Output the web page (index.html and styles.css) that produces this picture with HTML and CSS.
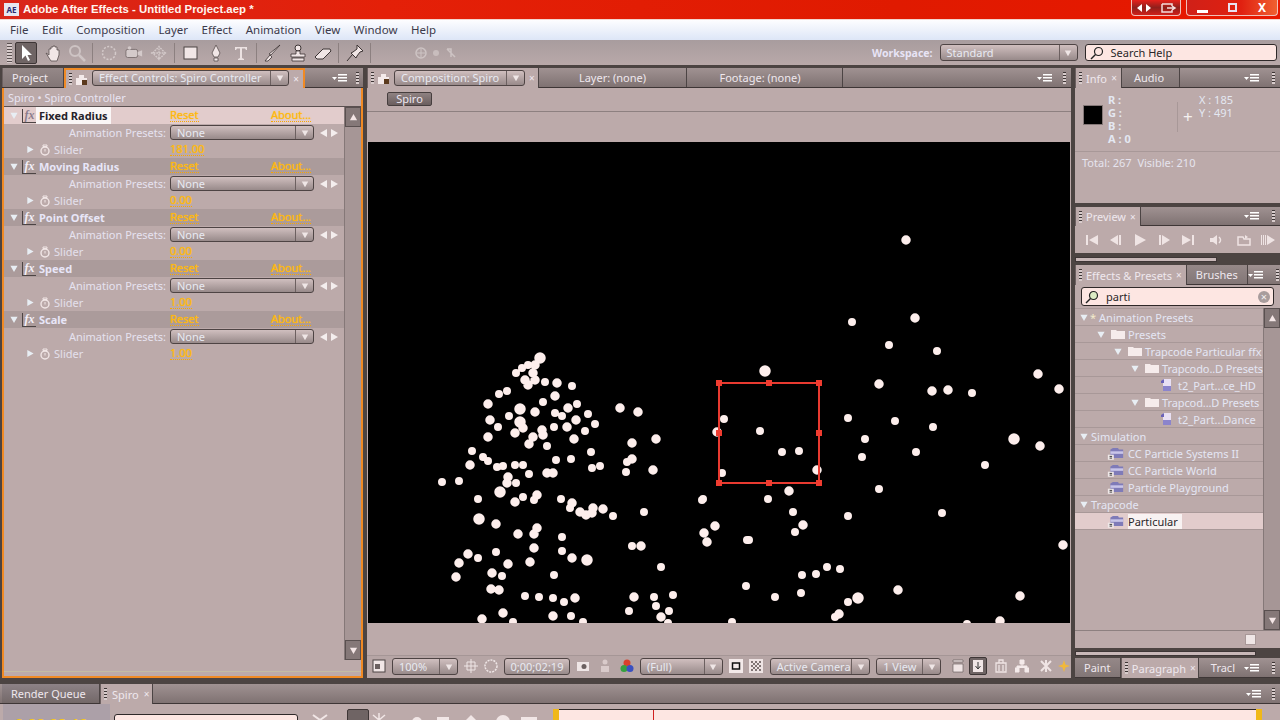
FILE: index.html
```html
<!DOCTYPE html>
<html lang="en">

<head>
    <meta charset="UTF-8">
    <meta name="viewport" content="width=device-width, initial-scale=1.0">
    <title>Adobe After Effects - Untitled Project.aep *</title>
    <link rel="stylesheet" href="styles.css">
</head>

<body>
    <svg class="defs" width="0" height="0">
        <symbol id="down" viewBox="0 0 10 10"><path d="M1 2h8L5 9z" /></symbol>
        <symbol id="right" viewBox="0 0 10 10"><path d="M2 1v8l7-4z" /></symbol>
        <symbol id="left" viewBox="0 0 10 10"><path d="M8 1v8L1 5z" /></symbol>
        <symbol id="up" viewBox="0 0 10 10"><path d="M1 8h8L5 1z" /></symbol>
        <symbol id="watch" viewBox="0 0 12 12"><circle cx="6" cy="7" r="4" fill="none" stroke="currentColor" stroke-width="1.4" /><path d="M4 1h4v1.500H4zM6 5v2.500" fill="none" stroke="currentColor" /></symbol>
        <symbol id="menu" viewBox="0 0 16 10"><path d="M0 4h5L2.500 7z" /><path d="M6 1h9v1.500H6zM6 4h9v1.500H6zM6 7h9v1.500H6z" /></symbol>
        <symbol id="folder" viewBox="0 0 14 12"><path d="M0 2h5l1 1h8v8H0z" /></symbol>
        <symbol id="preset" viewBox="0 0 14 14"><path d="M3 1h8v12H3z" fill="#e8e0f4" /><path d="M1 3l3-2v4H1z" fill="#6a62b8" /><path d="M3 8h8v5H3z" fill="#8b84cc" /></symbol>
        <symbol id="plugin" viewBox="0 0 20 16"><path d="M4 4l3-2h6l1 2h5v10H4z" fill="#7f7bb8" /><path d="M4 6h15v3H4z" fill="#c9c5e8" /><rect x="1" y="10" width="7" height="6" fill="#efe8e8" /><path d="M3 12h3M3 14h3" stroke="#222" /></symbol>
    </svg>

    <header class="titlebar">
        <span class="app-badge">AE</span>
        <span class="app-title">Adobe After Effects - Untitled Project.aep *</span>
        <div class="win-group win-small">
            <svg viewBox="0 0 20 12" width="20" height="12"><path d="M8 2v8L3 6zM12 2v8l5-4z" fill="#fff" /></svg>
            <svg viewBox="0 0 20 12" width="20" height="12"><path d="M4 2h10v2M4 2v8h10V8M9 6h8M14 4l3 2-3 2" fill="none" stroke="#f4dcdc" stroke-width="1.500" /></svg>
        </div>
        <div class="win-group win-big">
            <span class="win-btn"><i class="win-min"></i></span>
            <span class="win-btn"><i class="win-max"></i></span>
            <span class="win-btn win-close">X</span>
        </div>
    </header>

    <nav class="menubar">
        <span>File</span><span>Edit</span><span>Composition</span><span>Layer</span><span>Effect</span><span>Animation</span><span>View</span><span>Window</span><span>Help</span>
    </nav>

    <div class="toolbar">
        <span class="grip"></span>
        <span class="tool tool-on"><svg viewBox="0 0 16 18"><path d="M4 1v14l3.500-3.500L10 17l2-1-2.500-5H14z" fill="#fff" /></svg></span>
        <span class="tool"><svg viewBox="0 0 18 18"><path d="M3 9l3 5 2 3h6l2-6V6h-2V3h-2V2h-2v1H8v2H6v6z" fill="#f1e6e6" stroke="#5a5050" stroke-width=".8" /></svg></span>
        <span class="tool tool-dim"><svg viewBox="0 0 18 18"><circle cx="7" cy="7" r="5" fill="none" stroke="#d5cccc" stroke-width="2" /><path d="M11 11l6 6" stroke="#d5cccc" stroke-width="2.500" /></svg></span>
        <span class="tool-sep"></span>
        <span class="tool tool-dim"><svg viewBox="0 0 18 18"><circle cx="9" cy="9" r="6.500" fill="none" stroke="#ddd4d4" stroke-width="1.500" stroke-dasharray="2 1.500" /></svg></span>
        <span class="tool tool-dim"><svg viewBox="0 0 20 18"><rect x="1" y="5" width="13" height="9" rx="2" fill="#ddd4d4" stroke="#6b6060" /><path d="M14 8l5-2v7l-5-2z" fill="#ddd4d4" /><circle cx="5" cy="3.500" r="2" fill="#ddd4d4" /></svg></span>
        <span class="tool tool-dim"><svg viewBox="0 0 20 18"><path d="M3 9l7-7 7 7-7 7zM1 9h18M10 1v16" fill="none" stroke="#ddd4d4" stroke-width="1.500" stroke-dasharray="2 1" /></svg></span>
        <span class="tool-sep"></span>
        <span class="tool"><svg viewBox="0 0 18 18"><rect x="2" y="3" width="13" height="12" fill="#f1e6e6" stroke="#4c4444" /></svg></span>
        <span class="tool"><svg viewBox="0 0 18 18"><path d="M9 1l4 8-2 4H7L5 9zM7 14h4v3H7z" fill="#f1e6e6" stroke="#5a5050" stroke-width=".8" /></svg></span>
        <span class="tool"><svg viewBox="0 0 18 18"><path d="M3 3h12v3h-1l-1-1.500h-3V14l2 1v1H6v-1l2-1V4.500H5L4 6H3z" fill="#ece2e2" /></svg></span>
        <span class="tool-sep"></span>
        <span class="tool"><svg viewBox="0 0 18 18"><path d="M16 1L7 11l-2-1zM6 11l2 2-4 4H1z" fill="#f1e6e6" stroke="#3c3434" stroke-width=".8" /></svg></span>
        <span class="tool"><svg viewBox="0 0 18 18"><circle cx="9" cy="4" r="3" fill="#f1e6e6" stroke="#3c3434" /><path d="M7 7h4v3h5v3H2v-3h5zM3 14h12v3H3z" fill="#f1e6e6" stroke="#3c3434" stroke-width=".8" /></svg></span>
        <span class="tool"><svg viewBox="0 0 18 18"><path d="M1 13l8-8h7l1 2-8 8H3z" fill="#f1e6e6" stroke="#3c3434" /></svg></span>
        <span class="tool-sep"></span>
        <span class="tool"><svg viewBox="0 0 18 18"><path d="M11 1l6 6-3 1-3 4-1 2-5-5 2-1 4-3zM6 11l-5 6" fill="#f1e6e6" stroke="#3c3434" /></svg></span>
        <span class="tool-sep"></span>
        <span class="axis-group">
            <svg viewBox="0 0 12 12" width="12" height="12"><circle cx="6" cy="6" r="5" fill="none" stroke="#d5cccc" stroke-width="1.500" /><path d="M6 2v8M2 6h8" stroke="#d5cccc" /></svg>
            <svg viewBox="0 0 12 12" width="12" height="12"><circle cx="6" cy="6" r="3" fill="#cfc4c4" /></svg>
            <svg viewBox="0 0 12 12" width="12" height="12"><path d="M2 2h4v8M2 2l8 8" fill="none" stroke="#d5cccc" stroke-width="1.500" /></svg>
        </span>
        <span class="workspace-label">Workspace:</span>
        <span class="select workspace-select">Standard<i class="select-arrow"><svg><use href="#down" /></svg></i></span>
        <span class="search-help">
            <svg viewBox="0 0 14 14" width="14" height="14"><circle cx="8.500" cy="5.500" r="4" fill="none" stroke="#222" stroke-width="1.200" /><path d="M5.500 8.500L1 13" stroke="#222" stroke-width="1.400" /></svg>
            Search Help
        </span>
    </div>

    <main class="workspace">
        <section class="panel effects-panel">
            <div class="tabs">
                <span class="tab">Project</span>
                <span class="tab tab-on tab-focus">
                    <span class="tab-grip"></span>
                    <svg class="lock" viewBox="0 0 12 12" width="12" height="12"><path d="M0 5h3V2h5v3h3v7H0z" fill="#f4eaea" /><path d="M6 7h5v5H6z" fill="#5c3a1e" /></svg>
                    <span class="select tab-select">Effect Controls: Spiro Controller<i class="select-arrow"><svg><use href="#down" /></svg></i></span>
                    <span class="tab-x">×</span>
                </span>
                <span class="tab-end"><svg class="menu-icon"><use href="#menu" /></svg><span class="tab-grip"></span></span>
            </div>
            <div class="panel-body effects-body">
                <div class="effects-head">Spiro • Spiro Controller</div>
                <div class="effects-main">
                    <div class="fx-list">
                        <div class="fx-row fx-name fx-selected">
                            <div class="fx-title"><svg class="tri"><use href="#down" /></svg><span class="fx-box">fx</span><span class="fx-label fx-label-on">Fixed Radius</span></div>
                            <a class="link">Reset</a><a class="link">About...</a>
                        </div>
                        <div class="fx-row">
                            <div class="preset-label">Animation Presets:</div>
                            <div class="preset-cell"><span class="select preset-select">None<i class="select-arrow"><svg><use href="#down" /></svg></i></span><svg class="nav"><use href="#left" /></svg><svg class="nav"><use href="#right" /></svg></div>
                        </div>
                        <div class="fx-row">
                            <div class="slider-title"><svg class="tri"><use href="#right" /></svg><svg class="watch"><use href="#watch" /></svg>Slider</div>
                            <a class="link value">181.00</a>
                        </div>

                        <div class="fx-row fx-name">
                            <div class="fx-title"><svg class="tri"><use href="#down" /></svg><span class="fx-box">fx</span><span class="fx-label">Moving Radius</span></div>
                            <a class="link">Reset</a><a class="link">About...</a>
                        </div>
                        <div class="fx-row">
                            <div class="preset-label">Animation Presets:</div>
                            <div class="preset-cell"><span class="select preset-select">None<i class="select-arrow"><svg><use href="#down" /></svg></i></span><svg class="nav"><use href="#left" /></svg><svg class="nav"><use href="#right" /></svg></div>
                        </div>
                        <div class="fx-row">
                            <div class="slider-title"><svg class="tri"><use href="#right" /></svg><svg class="watch"><use href="#watch" /></svg>Slider</div>
                            <a class="link value">0.00</a>
                        </div>

                        <div class="fx-row fx-name">
                            <div class="fx-title"><svg class="tri"><use href="#down" /></svg><span class="fx-box">fx</span><span class="fx-label">Point Offset</span></div>
                            <a class="link">Reset</a><a class="link">About...</a>
                        </div>
                        <div class="fx-row">
                            <div class="preset-label">Animation Presets:</div>
                            <div class="preset-cell"><span class="select preset-select">None<i class="select-arrow"><svg><use href="#down" /></svg></i></span><svg class="nav"><use href="#left" /></svg><svg class="nav"><use href="#right" /></svg></div>
                        </div>
                        <div class="fx-row">
                            <div class="slider-title"><svg class="tri"><use href="#right" /></svg><svg class="watch"><use href="#watch" /></svg>Slider</div>
                            <a class="link value">0.00</a>
                        </div>

                        <div class="fx-row fx-name">
                            <div class="fx-title"><svg class="tri"><use href="#down" /></svg><span class="fx-box">fx</span><span class="fx-label">Speed</span></div>
                            <a class="link">Reset</a><a class="link">About...</a>
                        </div>
                        <div class="fx-row">
                            <div class="preset-label">Animation Presets:</div>
                            <div class="preset-cell"><span class="select preset-select">None<i class="select-arrow"><svg><use href="#down" /></svg></i></span><svg class="nav"><use href="#left" /></svg><svg class="nav"><use href="#right" /></svg></div>
                        </div>
                        <div class="fx-row">
                            <div class="slider-title"><svg class="tri"><use href="#right" /></svg><svg class="watch"><use href="#watch" /></svg>Slider</div>
                            <a class="link value">1.00</a>
                        </div>

                        <div class="fx-row fx-name">
                            <div class="fx-title"><svg class="tri"><use href="#down" /></svg><span class="fx-box">fx</span><span class="fx-label">Scale</span></div>
                            <a class="link">Reset</a><a class="link">About...</a>
                        </div>
                        <div class="fx-row">
                            <div class="preset-label">Animation Presets:</div>
                            <div class="preset-cell"><span class="select preset-select">None<i class="select-arrow"><svg><use href="#down" /></svg></i></span><svg class="nav"><use href="#left" /></svg><svg class="nav"><use href="#right" /></svg></div>
                        </div>
                        <div class="fx-row">
                            <div class="slider-title"><svg class="tri"><use href="#right" /></svg><svg class="watch"><use href="#watch" /></svg>Slider</div>
                            <a class="link value">1.00</a>
                        </div>
                    </div>
                    <div class="scrollbar fx-scroll">
                        <span class="scroll-btn"><svg><use href="#up" /></svg></span>
                        <span class="scroll-btn"><svg><use href="#down" /></svg></span>
                    </div>
                </div>
            </div>
        </section>

        <section class="panel comp-panel">
            <div class="tabs">
                <span class="tab tab-on comp-tab">
                    <span class="tab-grip"></span>
                    <svg class="lock" viewBox="0 0 12 12" width="12" height="12"><path d="M0 5h3V2h5v3h3v7H0z" fill="#f4eaea" /><path d="M6 7h5v5H6z" fill="#5c3a1e" /></svg>
                    <span class="select tab-select comp-select">Composition: Spiro<i class="select-arrow"><svg><use href="#down" /></svg></i></span>
                    <span class="tab-x">×</span>
                </span>
                <span class="tab comp-flat">Layer: (none)</span>
                <span class="tab comp-flat footage-tab">Footage: (none)</span>
                <span class="tab-end"><svg class="menu-icon"><use href="#menu" /></svg><span class="tab-grip"></span></span>
            </div>
            <div class="crumbs"><span class="crumb">Spiro</span></div>
            <div class="viewer-wrap">
                <svg class="viewer" viewBox="368 142 702 481" width="702" height="481">
                    <g class="dots">
                        <path stroke-width="8" d="M528 365h0M522 368h0M516 373h0M545 382h0M572 386h0M507 391h0M499 394h0M543 402h0M577 404h0M555 413h0M562 416h0M588 414h0M509 416h0M498 427h0M554 427h0M595 424h0M585 431h0M547 446h0M472 451h0M591 452h0M483 457h0M488 461h0M556 460h0M571 459h0M627 462h0M497 467h0M503 466h0M515 465h0M523 465h0M592 468h0M600 466h0M626 472h0M442 482h0M459 481h0M529 474h0M516 483h0M478 499h0M523 497h0M534 500h0M561 499h0M570 508h0M613 516h0M644 512h0M562 537h0M496 552h0M478 558h0M562 551h0M554 575h0M502 576h0M525 596h0M539 597h0M553 598h0M564 602h0M571 616h0M513 622h0M583 622h0M632 546h0M661 567h0M654 597h0M673 595h0M656 606h0M629 611h0M669 611h0M668 623h0M732 622h0M747 540h0M746 586h0M702 500h0M852 322h0M889 345h0M937 351h0M972 393h0M848 418h0M895 421h0M933 427h0M724 419h0M760 431h0M782 452h0M799 451h0M865 439h0M862 457h0M916 452h0M985 465h0M722 473h0M879 489h0M768 499h0M703 499h0M793 512h0M848 516h0M942 513h0M795 532h0M749 540h0M827 567h0M840 569h0M802 575h0M816 574h0M775 597h0M801 593h0M848 602h0M835 617h0M967 624h0" />
                        <path stroke-width="9.500" d="M535 365h0M533 373h0M525 380h0M535 380h0M528 385h0M557 383h0M555 396h0M488 404h0M535 412h0M568 408h0M490 420h0M523 428h0M515 433h0M576 420h0M567 427h0M542 430h0M543 435h0M533 437h0M488 437h0M574 439h0M529 444h0M620 408h0M638 412h0M632 443h0M656 439h0M470 465h0M632 459h0M653 470h0M547 473h0M553 473h0M508 477h0M507 483h0M537 495h0M515 502h0M572 503h0M580 512h0M586 515h0M593 508h0M592 513h0M603 509h0M496 524h0M518 534h0M537 528h0M534 534h0M534 548h0M468 554h0M459 563h0M572 558h0M530 562h0M508 564h0M492 573h0M456 577h0M491 589h0M499 590h0M575 598h0M503 613h0M482 619h0M553 616h0M641 546h0M634 597h0M661 617h0M715 526h0M704 533h0M707 542h0M906 240h0M915 318h0M879 384h0M932 391h0M948 390h0M1038 374h0M1059 389h0M717 432h0M1040 446h0M817 470h0M789 491h0M803 525h0M1063 545h0M898 590h0M1020 596h0M839 614h0M1000 621h0" />
                        <path stroke-width="11.500" d="M540 358h0M520 409h0M520 422h0M500 492h0M479 519h0M587 560h0M765 371h0M1014 439h0M858 598h0" />
                    </g>
                    <g class="mask-box">
                        <rect x="719" y="383" width="100" height="100" />
                        <path class="handles" d="M716 380h6v6h-6zM766 380h6v6h-6zM816 380h6v6h-6zM716 430h6v6h-6zM816 430h6v6h-6zM716 480h6v6h-6zM766 480h6v6h-6zM816 480h6v6h-6z" />
                    </g>
                </svg>
            </div>
            <div class="viewer-foot">
                <svg class="foot-icon" viewBox="0 0 14 14"><rect x="1" y="1" width="12" height="12" fill="#f1e6e6" stroke="#4c4444" /><rect x="3" y="5" width="5" height="5" fill="#6b6060" /></svg>
                <span class="select foot-zoom">100%<i class="select-arrow"><svg><use href="#down" /></svg></i></span>
                <svg class="foot-icon" viewBox="0 0 14 14"><path d="M3 3h8v8H3zM0 7h14M7 0v14" fill="none" stroke="#efe6e6" /></svg>
                <svg class="foot-icon" viewBox="0 0 14 14"><circle cx="7" cy="7" r="6" fill="none" stroke="#efe6e6" stroke-dasharray="2 1" stroke-width="1.500" /></svg>
                <span class="select foot-time">0;00;02;19</span>
                <svg class="foot-icon" viewBox="0 0 14 14"><path d="M1 3h12v9H1z" fill="#efe6e6" /><circle cx="8" cy="7.500" r="2.500" fill="#6b6060" /></svg>
                <svg class="foot-icon foot-person" viewBox="0 0 14 14"><circle cx="7" cy="3" r="2.500" fill="#d9caca" /><path d="M3 13V7h8v6z" fill="#d9caca" /></svg>
                <svg class="foot-icon foot-person" viewBox="0 0 14 14"><circle cx="7" cy="4" r="3.500" fill="#d8402c" /><circle cx="4" cy="9.500" r="3.500" fill="#36a040" /><circle cx="10" cy="9.500" r="3.500" fill="#3a50c0" /></svg>
                <span class="select foot-full">(Full)<i class="select-arrow"><svg><use href="#down" /></svg></i></span>
                <svg class="foot-icon" viewBox="0 0 14 14"><rect width="14" height="14" fill="#f4eaea" /><rect x="3.500" y="4" width="7" height="6" fill="none" stroke="#111" stroke-width="1.500" /></svg>
                <svg class="foot-icon" viewBox="0 0 14 14"><rect width="14" height="14" fill="#efe4e4" /><path d="M2 2h2v2H2zM6 2h2v2H6zM10 2h2v2h-2zM4 4h2v2H4zM8 4h2v2H8zM2 6h2v2H2zM6 6h2v2H6zM10 6h2v2h-2zM4 8h2v2H4zM8 8h2v2H8zM2 10h2v2H2zM6 10h2v2H6zM10 10h2v2h-2z" fill="#807474" /></svg>
                <span class="select foot-cam">Active Camera<i class="select-arrow"><svg><use href="#down" /></svg></i></span>
                <span class="select foot-view">1 View<i class="select-arrow"><svg><use href="#down" /></svg></i></span>
                <svg class="foot-icon foot-far" viewBox="0 0 14 14"><path d="M2 1h10v2H2zM2 5h10v8H2z" fill="#efe4e4" stroke="#5a5050" stroke-width=".6" /></svg>
                <span class="foot-boxed"><svg class="foot-icon" viewBox="0 0 14 14"><path d="M2 1h10v12H2z" fill="#f1e6e6" /><path d="M7 3v6M4.500 7L7 10l2.500-3" fill="none" stroke="#333" /></svg></span>
                <svg class="foot-icon foot-nudge" viewBox="0 0 14 14"><path d="M2 4h10v9H2zM5 4V1h4v3M5 6v6M9 6v6" fill="none" stroke="#efe4e4" stroke-width="1.300" /></svg>
                <svg class="foot-icon foot-nudge" viewBox="0 0 14 14"><path d="M5 1h4v4H5zM0 9h4v4H0zM10 9h4v4h-4zM7 5v2M2 9V7h10v2" fill="#f4eaea" stroke="#f4eaea" /></svg>
                <svg class="foot-icon foot-fx" viewBox="0 0 14 14"><path d="M2 2l10 10M12 2L2 12M7 1v12" fill="none" stroke="#efe4e4" stroke-width="2" /></svg>
                <svg class="foot-icon foot-star" viewBox="0 0 14 14"><path d="M7 1l1.500 4.500L13 7 8.500 8.500 7 13 5.500 8.500 1 7l4.500-1.500z" fill="#f0b83c" /></svg>
            </div>
        </section>

        <aside class="side">
            <section class="panel info-panel">
                <div class="tabs">
                    <span class="tab tab-on side-tab info-tab"><span class="tab-grip"></span>Info<span class="tab-x">×</span></span>
                    <span class="tab audio-tab">Audio</span>
                    <span class="tab-end"><svg class="menu-icon"><use href="#menu" /></svg><span class="tab-grip"></span></span>
                </div>
                <div class="panel-body info-body">
                    <div class="info-top">
                        <span class="swatch"></span>
                        <div class="rgba"><span>R :</span><span>G :</span><span>B :</span><span>A : 0</span></div>
                        <span class="cross">+</span>
                        <div class="xy"><span>X : 185</span><span>Y : 491</span></div>
                    </div>
                    <div class="totals">Total: 267&nbsp; Visible: 210</div>
                </div>
            </section>

            <section class="panel preview-panel">
                <div class="tabs">
                    <span class="tab tab-on side-tab"><span class="tab-grip"></span>Preview<span class="tab-x">×</span></span>
                    <span class="tab-end"><svg class="menu-icon"><use href="#menu" /></svg><span class="tab-grip"></span></span>
                </div>
                <div class="panel-body preview-body">
                    <svg viewBox="0 0 14 12"><path d="M1 1h2v10H1zM13 1v10L4 6z" /></svg>
                    <svg viewBox="0 0 14 12"><path d="M10 1h2v10h-2zM9 1v10L1 6z" /></svg>
                    <svg viewBox="0 0 14 12"><path d="M2 0v12l11-6z" /></svg>
                    <svg viewBox="0 0 14 12"><path d="M2 1h2v10H2zM5 1v10l8-5z" /></svg>
                    <svg viewBox="0 0 14 12"><path d="M1 1v10l9-5zM11 1h2v10h-2z" /></svg>
                    <svg class="preview-far" viewBox="0 0 14 12"><path d="M1 4h3l4-3v10L4 8H1z" /><path d="M10 3q3 3 0 6" fill="none" stroke="#efe4e4" stroke-width="1.500" /></svg>
                    <svg class="preview-far" viewBox="0 0 14 12"><path d="M1 3h5l1 2h6v6H1z" fill="none" stroke="#efe4e4" stroke-width="1.500" /><path d="M8 1l3 2-3 2z" /></svg>
                    <svg viewBox="0 0 14 12"><path d="M0 1h1v10H0zM2 1h1v10H2zM4 1h1v10H4zM6 1v10l8-5z" /></svg>
                </div>
            </section>
            <div class="strip strip-top"><i></i></div>

            <section class="panel presets-panel">
                <div class="tabs">
                    <span class="tab tab-on presets-tab"><span class="tab-grip"></span>Effects &amp; Presets<span class="tab-x">×</span></span>
                    <span class="tab">Brushes</span>
                    <span class="tab-end"><svg class="menu-icon"><use href="#menu" /></svg><span class="tab-grip"></span></span>
                </div>
                <div class="panel-body presets-body">
                    <div class="preset-search">
                        <svg viewBox="0 0 14 14" width="14" height="14"><circle cx="8.500" cy="5.500" r="4" fill="#dcecc4" stroke="#222" stroke-width="1.200" /><path d="M5.500 8.500L1 13" stroke="#222" stroke-width="1.400" /></svg>
                        <span class="search-text">parti</span>
                        <span class="search-clear">×</span>
                    </div>
                    <div class="tree-wrap">
                        <div class="tree">
                            <div class="tree-row d0"><svg class="tri"><use href="#down" /></svg><span class="star">*</span>Animation Presets</div>
                            <div class="tree-row d1"><svg class="tri"><use href="#down" /></svg><svg class="folder"><use href="#folder" /></svg>Presets</div>
                            <div class="tree-row d2"><svg class="tri"><use href="#down" /></svg><svg class="folder"><use href="#folder" /></svg>Trapcode Particular ffx</div>
                            <div class="tree-row d3"><svg class="tri"><use href="#down" /></svg><svg class="folder"><use href="#folder" /></svg>Trapcodo..D Presets</div>
                            <div class="tree-row d4"><svg class="item-icon"><use href="#preset" /></svg>t2_Part...ce_HD</div>
                            <div class="tree-row d3"><svg class="tri"><use href="#down" /></svg><svg class="folder"><use href="#folder" /></svg>Trapcod...D Presets</div>
                            <div class="tree-row d4"><svg class="item-icon"><use href="#preset" /></svg>t2_Part...Dance</div>
                            <div class="tree-row d0"><svg class="tri"><use href="#down" /></svg>Simulation</div>
                            <div class="tree-row d5"><svg class="plugin"><use href="#plugin" /></svg>CC Particle Systems II</div>
                            <div class="tree-row d5"><svg class="plugin"><use href="#plugin" /></svg>CC Particle World</div>
                            <div class="tree-row d5"><svg class="plugin"><use href="#plugin" /></svg>Particle Playground</div>
                            <div class="tree-row d0"><svg class="tri"><use href="#down" /></svg>Trapcode</div>
                            <div class="tree-row d5 tree-on"><svg class="plugin"><use href="#plugin" /></svg><span class="tree-label-on">Particular</span></div>
                        </div>
                        <div class="scrollbar tree-scroll">
                            <span class="scroll-btn"><svg><use href="#up" /></svg></span>
                            <span class="scroll-btn"><svg><use href="#down" /></svg></span>
                        </div>
                    </div>
                    <div class="presets-foot"><span class="new-item"></span></div>
                </div>
            </section>
            <div class="strip strip-bottom"><i></i></div>

            <section class="panel para-panel">
                <div class="tabs">
                    <span class="tab">Paint</span>
                    <span class="tab tab-on para-tab"><span class="tab-grip"></span>Paragraph<span class="tab-x">×</span></span>
                    <span class="tab track-tab">Tracl</span>
                    <span class="tab-end"><svg class="menu-icon"><use href="#menu" /></svg><span class="tab-grip"></span></span>
                </div>
            </section>
        </aside>
    </main>

    <section class="timeline">
        <div class="tabs">
            <span class="tab queue-tab">Render Queue</span>
            <span class="tab tab-on side-tab"><span class="tab-grip"></span>Spiro<span class="tab-x">×</span></span>
            <span class="tab-end"><svg class="menu-icon"><use href="#menu" /></svg><span class="tab-grip"></span></span>
        </div>
        <div class="timeline-row">
            <div class="time-box">0;00;02;19</div>
            <div class="layer-search"></div>
            <div class="tl-icons">
                <svg viewBox="0 0 16 14"><path d="M1 2l14 10M15 2L1 12" stroke="#f1e6e6" stroke-width="2" /></svg>
                <span class="foot-boxed tl-boxed"></span>
                <svg viewBox="0 0 16 14"><path d="M2 2l12 10M14 2L2 12M8 0v14" stroke="#f1e6e6" stroke-width="1.500" /></svg>
                <svg viewBox="0 0 16 14"><circle cx="8" cy="9" r="5" fill="#f1e6e6" /></svg>
                <svg viewBox="0 0 16 14"><path d="M2 4h12v10H2z" fill="#f1e6e6" /></svg>
                <svg viewBox="0 0 16 14"><path d="M8 2l7 7-2 5H3L1 9z" fill="#f1e6e6" /></svg>
                <svg viewBox="0 0 16 14"><circle cx="8" cy="9" r="7" fill="#f1e6e6" /></svg>
                <svg viewBox="0 0 16 14"><path d="M0 4h16v10H0z" fill="#f1e6e6" /></svg>
            </div>
            <div class="ruler">
                <span class="ruler-mark"></span>
                <span class="ruler-bar"><span class="playhead"></span></span>
                <span class="ruler-mark ruler-mark-end"></span>
            </div>
        </div>
    </section>
</body>

</html>
```

FILE: styles.css
```css
* {
    box-sizing: border-box;
}

body {
    margin: 0;
    width: 1280px;
    height: 720px;
    overflow: hidden;
    display: flex;
    flex-direction: column;
    background-color: #4c4442;
    font-family: "Noto Sans", Arial, sans-serif;
    font-size: 11px;
    color: #eee8f2;
}

svg {
    display: block;
    flex: none;
    fill: currentColor;
}

.defs {
    position: absolute;
}

/* title and menu */

.titlebar {
    height: 20px;
    display: flex;
    align-items: flex-start;
    flex: none;
    background: linear-gradient(90deg, #d8261a, #e42008 30%, #e01a00 70%, #e81800);
    border-bottom: 1px solid #f3d6d0;
}

.app-badge {
    width: 15px;
    height: 13px;
    margin: 3px 4px 0 4px;
    background-color: #e6e6f0;
    color: #2a2a70;
    font-size: 8px;
    font-weight: bold;
    line-height: 13px;
    text-align: center;
}

.app-title {
    color: #fff4ee;
    font-family: "Liberation Sans", Arial, sans-serif;
    font-size: 11.4px;
    font-weight: bold;
    line-height: 19px;
}

.win-group {
    height: 16px;
    display: flex;
    align-items: center;
    justify-content: space-around;
    border: 1px solid #f0c0b8;
    border-top: 0;
    border-radius: 0 0 4px 4px;
}

.win-small {
    width: 50px;
    margin-left: auto;
    background: linear-gradient(#e8201a, #90201c 50%, #d02018);
}

.win-big {
    width: 92px;
    margin: 0 2px 0 5px;
    background: linear-gradient(90deg, #d02018, #e02010 60%, #f06030);
}

.win-btn {
    flex: 1;
    height: 100%;
    display: flex;
    align-items: center;
    justify-content: center;
    color: #fff;
    font-size: 12px;
    font-weight: bold;
}

.win-min {
    width: 11px;
    height: 3px;
    margin-top: 7px;
    background-color: #fff;
}

.win-max {
    width: 9px;
    height: 9px;
    border: 2px solid #e8e0f0;
}

.menubar {
    height: 20px;
    flex: none;
    display: flex;
    align-items: center;
    padding: 0 0 2px 10px;
    gap: 13.6px;
    background: linear-gradient(#fdfdff, #dde6f7);
    color: #3c3a4a;
    font-size: 11.5px;
}

/* toolbar */

.toolbar {
    height: 25px;
    flex: none;
    display: flex;
    align-items: center;
    padding-left: 7px;
    background: linear-gradient(#a89c9e, #b9a9a9);
}

.grip {
    width: 5px;
    height: 20px;
    margin-right: 3px;
    background: repeating-linear-gradient(#5a5050 0 1px, #d8cccc 1px 3px);
}

.tool {
    width: 25px;
    height: 22px;
    display: flex;
    align-items: center;
    justify-content: center;
}

.tool svg {
    width: 18px;
    height: 18px;
}

.tool-on {
    width: 22px;
    margin-right: 2px;
    background-color: #6f6464;
    border: 1px solid #3e3636;
    border-radius: 2px;
}

.tool-dim {
    opacity: .8;
}

.tool-sep {
    width: 1px;
    height: 20px;
    margin: 0 3px;
    background-color: #8c8080;
}

.axis-group {
    display: flex;
    gap: 3px;
    margin-left: 41px;
    opacity: .8;
}

.workspace-label {
    margin-left: 415px;
    font-size: 10.5px;
    font-weight: bold;
    color: #e8e4f6;
}

.select {
    position: relative;
    display: inline-block;
    height: 17px;
    line-height: 15px;
    padding-left: 6px;
    background: linear-gradient(#d0bfbf, #988a8a);
    border: 1px solid #4e4444;
    border-radius: 3px;
    color: #e8eaf2;
    white-space: nowrap;
    overflow: hidden;
}

.select-arrow {
    position: absolute;
    right: 0;
    top: 0;
    width: 18px;
    height: 100%;
    display: flex;
    align-items: center;
    justify-content: center;
    border-left: 1px solid #6c6060;
    color: #efe6e6;
}

.select-arrow svg {
    width: 10px;
    height: 8px;
}

.workspace-select {
    width: 138px;
    margin-left: 7px;
}

.search-help {
    width: 192px;
    height: 17px;
    margin-left: 7px;
    display: flex;
    align-items: center;
    gap: 7px;
    padding-left: 4px;
    background-color: #fde6e2;
    border: 1px solid #2e2828;
    border-radius: 3px;
    color: #2a2628;
}

/* panels */

.workspace {
    height: 618px;
    flex: none;
    display: flex;
    padding: 3px 0 0 2px;
    gap: 4px;
}

.panel {
    display: flex;
    flex-direction: column;
    min-height: 0;
}

.tabs {
    height: 20px;
    flex: none;
    display: flex;
    align-items: stretch;
    background: linear-gradient(#a09292, #7f7272);
    border-bottom: 1px solid #3e3636;
}

.tab {
    display: flex;
    align-items: center;
    gap: 4px;
    padding: 0 9px;
    background: linear-gradient(#958888, #827676);
    border-right: 1px solid #4c4444;
    color: #efe8ee;
    white-space: nowrap;
}

.tab-on {
    padding: 0 4px 0 3px;
    background: #bcaaaa;
    margin-bottom: -1px;
    border-left: 1px solid #6c6060;
}

.tab-focus {
    border: 2px solid #f08a24;
    border-bottom: 0;
    width: 241px;
}

.tab-grip {
    width: 3px;
    height: 12px;
    flex: none;
    background: repeating-linear-gradient(#3e3636 0 1px, #d8cccc 1px 3px);
}

.tab-select {
    width: 197px;
    height: 16px;
    line-height: 14px;
    flex: none;
    margin-top: -2px;
    padding-right: 18px;
}

.tab-x {
    margin-left: auto;
    color: #efe8ee;
    font-size: 10px;
}

.tab-end {
    margin-left: auto;
    display: flex;
    align-items: center;
    gap: 10px;
    padding-right: 5px;
}

.menu-icon {
    width: 16px;
    height: 10px;
    color: #fff;
}

.panel-body {
    background-color: #bcaaaa;
    flex: 1;
    min-height: 0;
}

/* effect controls */

.effects-panel {
    width: 361px;
}

.effects-panel .tabs {
    padding-left: 0;
}

.effects-panel .tab:first-child {
    width: 62px;
    border-left: 1px solid #6c6060;
}

.effects-panel .tab-end {
    padding-right: 4px;
    gap: 8px;
}

.effects-body {
    display: flex;
    flex-direction: column;
    border: 2px solid #f08a24;
    border-top: 0;
    height: 590px;
    flex: none;
}

.effects-head {
    height: 19px;
    flex: none;
    padding-left: 4px;
    line-height: 19px;
    border-bottom: 1px solid #5a5050;
    color: #e8e4f2;
}

.effects-main {
    flex: 1;
    display: flex;
    min-height: 0;
    margin-bottom: 4px;
    padding-bottom: 11px;
    border-bottom: 1px solid #c4bca4;
}

.fx-list {
    flex: 1;
}

.fx-row {
    height: 17px;
    display: grid;
    grid-template-columns: 166px 101px 1fr;
    align-items: center;
    white-space: nowrap;
}

.fx-name {
    background-color: #ab9b9b;
}

.fx-selected {
    background-color: #e2cccc;
}

.fx-title {
    display: flex;
    align-items: center;
    height: 100%;
    padding-left: 5px;
}

.tri {
    width: 10px;
    height: 9px;
    color: #e8eef4;
}

.fx-box {
    width: 14px;
    height: 14px;
    margin-left: 3px;
    border: 1px solid #4c4444;
    border-width: 0 0 1px 1px;
    color: #f4f0f8;
    font-family: "Liberation Serif", serif;
    font-size: 12px;
    font-style: italic;
    font-weight: bold;
    line-height: 13px;
    text-align: center;
}

.fx-selected .fx-box {
    color: #8d7d8d;
}

.fx-label {
    padding: 0 3px;
    font-weight: bold;
    color: #e8e6f8;
    line-height: 17px;
}

.fx-label-on {
    background-color: #faf6f6;
    color: #26222a;
}

.link {
    justify-self: start;
    height: 13px;
    color: #ffb70f;
    text-shadow: 0 0 1px #f8c020;
    border-bottom: 1px dotted #f8a800;
    line-height: 12px;
}

.value {
    grid-column: 2;
}

.preset-label {
    text-align: right;
    padding-right: 4px;
    color: #e6e2f0;
}

.preset-cell {
    grid-column: 2 / 4;
    display: flex;
    align-items: center;
}

.preset-select {
    width: 144px;
    height: 15px;
    line-height: 13px;
    padding-left: 6px;
    margin-right: 5px;
    flex: none;
}

.nav {
    width: 10px;
    height: 10px;
    color: #f4eeee;
}

.slider-title {
    display: flex;
    align-items: center;
    padding-left: 21px;
    color: #e4e0ec;
}

.watch {
    width: 12px;
    height: 12px;
    margin: 0 3px 0 4px;
    color: #f1e6e6;
}

.scrollbar {
    flex: none;
    display: flex;
    flex-direction: column;
    justify-content: space-between;
    background-color: #a69696;
    border-left: 1px solid #857878;
}

.fx-scroll {
    width: 17px;
}

.scroll-btn {
    height: 20px;
    display: flex;
    align-items: center;
    justify-content: center;
    background-color: #857878;
    border: 1px solid #5a5050;
    color: #f4e6e6;
}

.scroll-btn svg {
    width: 11px;
    height: 9px;
}

/* composition */

.comp-panel {
    width: 704px;
}

.comp-tab {
    width: 172px;
    gap: 4px;
}

.tab-select.comp-select {
    width: 131px;
    margin-top: 0;
}

.comp-flat {
    width: 148px;
    justify-content: center;
    background: transparent;
    border-left: 0;
}

.footage-tab {
    width: 156px;
    padding-right: 18px;
}

.crumbs {
    height: 54px;
    flex: none;
    padding: 2px 0 0 20px;
    background-color: #bcaaaa;
    border-top: 1px solid #bcaaaa;
    box-shadow: inset 0 22px 0 #bcaaaa, inset 0 23px 0 #8d8080;
}

.crumb {
    display: inline-block;
    width: 45px;
    height: 14px;
    background: linear-gradient(#8f8282, #6a5e5e);
    border: 1px solid #463e3e;
    border-radius: 2px;
    line-height: 12px;
    text-align: center;
}

.viewer-wrap {
    padding: 0 1px;
    background-color: #bcaaaa;
    flex: none;
}

.viewer {
    background-color: #000;
}

.dots path {
    fill: none;
    stroke: #fdeeec;
    stroke-linecap: round;
    filter: blur(.6px);
}

.mask-box rect {
    fill: none;
    stroke: #e83a30;
    stroke-width: 2;
}

.handles {
    fill: #f03c30;
}

.viewer-foot {
    height: 55px;
    flex: none;
    display: flex;
    align-items: flex-end;
    padding: 0 0 3px 5px;
    gap: 6px;
    background-color: #bcaaaa;
    box-shadow: inset 0 -22px 0 #b6a5a5, inset 0 -23px 0 #a59696;
}

.foot-icon {
    width: 14px;
    height: 14px;
    margin-bottom: 2px;
}

.foot-person {
    margin-left: 2px;
}

.foot-zoom {
    width: 67px;
}

.foot-time {
    width: 67px;
    text-align: center;
    padding-left: 0;
}

.foot-full {
    width: 84px;
}

.foot-cam {
    width: 102px;
    margin-left: 1px;
}

.foot-view {
    width: 66px;
}

.foot-far {
    margin-left: 4px;
}

.foot-boxed {
    width: 18px;
    height: 18px;
    margin-left: -2px;
    display: flex;
    align-items: center;
    justify-content: center;
    background-color: #6f6464;
    border: 1px solid #3e3636;
    border-radius: 2px;
}

.foot-boxed .foot-icon {
    margin-bottom: 0;
}

.foot-nudge {
    margin-left: 1px;
}

.foot-fx {
    margin-left: 4px;
}

.foot-star {
    margin-left: -2px;
}

/* right column */

.side {
    width: 205px;
    display: flex;
    flex-direction: column;
}

.side .tab-end {
    gap: 12px;
}

.info-panel {
    height: 135px;
    flex: none;
}

.info-tab {
    width: 47px;
}

.audio-tab {
    width: 58px;
    padding-left: 12px;
}

.info-body {
    display: flex;
    flex-direction: column;
}

.info-top {
    height: 64px;
    flex: none;
    display: flex;
    padding: 5px 0 0 8px;
    border-bottom: 1px solid #a89898;
    color: #e4e8f2;
}

.swatch {
    width: 20px;
    height: 20px;
    margin-top: 12px;
    background-color: #000;
    border: 1px solid #857878;
}

.rgba {
    width: 74px;
    padding-left: 5px;
    display: flex;
    flex-direction: column;
    font-weight: bold;
    line-height: 13px;
}

.cross {
    width: 22px;
    margin-top: 9px;
    padding-left: 5px;
    border-left: 1px solid #a89898;
    height: 30px;
    font-size: 17px;
    line-height: 30px;
    color: #f4f0f0;
}

.xy {
    display: flex;
    flex-direction: column;
    line-height: 13px;
}

.totals {
    padding: 3px 0 0 7px;
    color: #e6e4ee;
}

.preview-panel {
    height: 46px;
    flex: none;
    margin-top: 4px;
}

.preview-panel .tabs {
    height: 19px;
}

.preview-body {
    display: flex;
    align-items: center;
    gap: 10px;
    padding-left: 10px;
    color: #efe4e4;
}

.preview-body svg {
    width: 14px;
    height: 12px;
}

.preview-body .preview-far {
    margin-left: 4px;
}

.strip {
    flex: none;
    display: flex;
    align-items: center;
}

.strip i {
    display: block;
    height: 5px;
    background-color: #c8b8b8;
    border: 1px solid #3e3636;
}

.strip-top {
    height: 12px;
}

.strip-top i {
    width: 142px;
}

.presets-panel {
    height: 383px;
    flex: none;
}

.presets-tab {
    width: 115px;
}

.presets-body {
    display: flex;
    flex-direction: column;
}

.preset-search {
    height: 19px;
    flex: none;
    margin: 2px 6px 2px 6px;
    display: flex;
    align-items: center;
    gap: 7px;
    padding: 0 3px;
    background-color: #fde6e2;
    border: 1px solid #2e2828;
    border-radius: 3px;
    color: #2a2628;
}

.search-clear {
    margin-left: auto;
    width: 12px;
    height: 12px;
    border-radius: 50%;
    background-color: #a89c9c;
    color: #f4f0f0;
    font-size: 11px;
    line-height: 11px;
    text-align: center;
}

.tree-wrap {
    flex: 1;
    display: flex;
    min-height: 0;
}

.tree {
    flex: 1;
    overflow: hidden;
    border-top: 1px solid #a89898;
}

.tree-row {
    height: 17px;
    display: flex;
    align-items: center;
    border-bottom: 1px solid #a89898;
    color: #e4e6f4;
    white-space: nowrap;
    overflow: hidden;
}

.star {
    margin: 0 3px 0 -1px;
    color: #f4eccc;
}

.d0 {
    padding-left: 4px;
}

.d0 .tri {
    margin-right: 2px;
}

.d1 {
    padding-left: 21px;
}

.d2 {
    padding-left: 38px;
}

.d3 {
    padding-left: 55px;
    letter-spacing: -.1px;
}

.d4 {
    padding-left: 85px;
}

.d5 {
    padding-left: 32px;
}

.folder {
    width: 14px;
    height: 12px;
    margin: 0 3px 0 5px;
    color: #f6ecec;
}

.item-icon {
    width: 14px;
    height: 14px;
    margin: 0 4px 0 0;
}

.plugin {
    width: 17px;
    height: 14px;
    margin-right: 4px;
}

.tree-on {
    background-color: #e2cccc;
    color: #2a262a;
}

.tree-label-on {
    padding: 0 4px 0 0;
    background-color: #f8f2f2;
}

.tree-scroll {
    width: 17px;
}

.presets-foot {
    height: 18px;
    flex: none;
    display: flex;
    align-items: center;
    justify-content: flex-end;
    padding-right: 24px;
    border-top: 1px solid #8d8080;
}

.new-item {
    width: 11px;
    height: 11px;
    background-color: #efe6e6;
    border: 1px solid #a89898;
}

.strip-bottom {
    height: 10px;
}

.strip-bottom i {
    width: 181px;
}

.para-panel {
    height: 20px;
    flex: none;
}

.para-panel .tab {
    padding: 0 9px;
}

.para-panel .tab:first-child {
    width: 53px;
}

.para-panel .para-tab {
    width: 78px;
    padding: 0 3px;
}

.para-panel .track-tab {
    padding-left: 12px;
    border-right: 0;
    background: transparent;
}

/* timeline */

.timeline {
    flex: 1;
    display: flex;
    flex-direction: column;
    margin-top: 1px;
    min-height: 0;
}

.queue-tab {
    width: 98px;
    margin-left: 2px;
    background: linear-gradient(#8d8286, #736868);
}

.timeline .side-tab {
    width: 53px;
    gap: 5px;
}

.timeline-row {
    flex: 1;
    display: flex;
    background-color: #bcaaaa;
    min-height: 0;
    overflow: hidden;
}

.time-box {
    width: 107px;
    margin-left: 3px;
    padding: 9px 0 0 12px;
    background-color: #aca0a8;
    color: #f8c818;
    font-size: 15px;
    font-weight: bold;
    white-space: nowrap;
    overflow: hidden;
}

.layer-search {
    width: 184px;
    height: 14px;
    margin: 10px 0 0 4px;
    background-color: #fde6e2;
    border: 1px solid #2e2828;
    border-radius: 3px;
}

.tl-icons {
    width: 255px;
    padding: 9px 0 0 14px;
    display: flex;
    gap: 13px;
}

.tl-icons svg {
    width: 16px;
    height: 14px;
    overflow: hidden;
}

.tl-icons .tl-boxed {
    width: 22px;
    height: 16px;
    margin: -4px 0 0 6px;
}

.tl-icons svg:nth-child(3) {
    margin-left: -11px;
}

.tl-icons svg:nth-child(4) {
    margin-left: 9px;
}

.tl-icons svg:nth-child(5) {
    margin-left: -3px;
}

.tl-icons svg:nth-child(6) {
    margin-left: -1px;
}

.tl-icons svg:nth-child(7) {
    margin-left: 3px;
}

.tl-icons svg:nth-child(8) {
    margin-left: -3px;
}

.ruler {
    flex: 1;
    display: flex;
    align-items: flex-start;
    padding-top: 5px;
}

.ruler-mark {
    width: 6px;
    height: 12px;
    background-color: #f0b818;
    flex: none;
}

.ruler-bar {
    position: relative;
    width: 697px;
    height: 11px;
    background-color: #fde6e2;
    border-top: 1px solid #2e2828;
}

.playhead {
    position: absolute;
    left: 94px;
    top: 0;
    width: 1px;
    height: 10px;
    background-color: #d02020;
}
```
